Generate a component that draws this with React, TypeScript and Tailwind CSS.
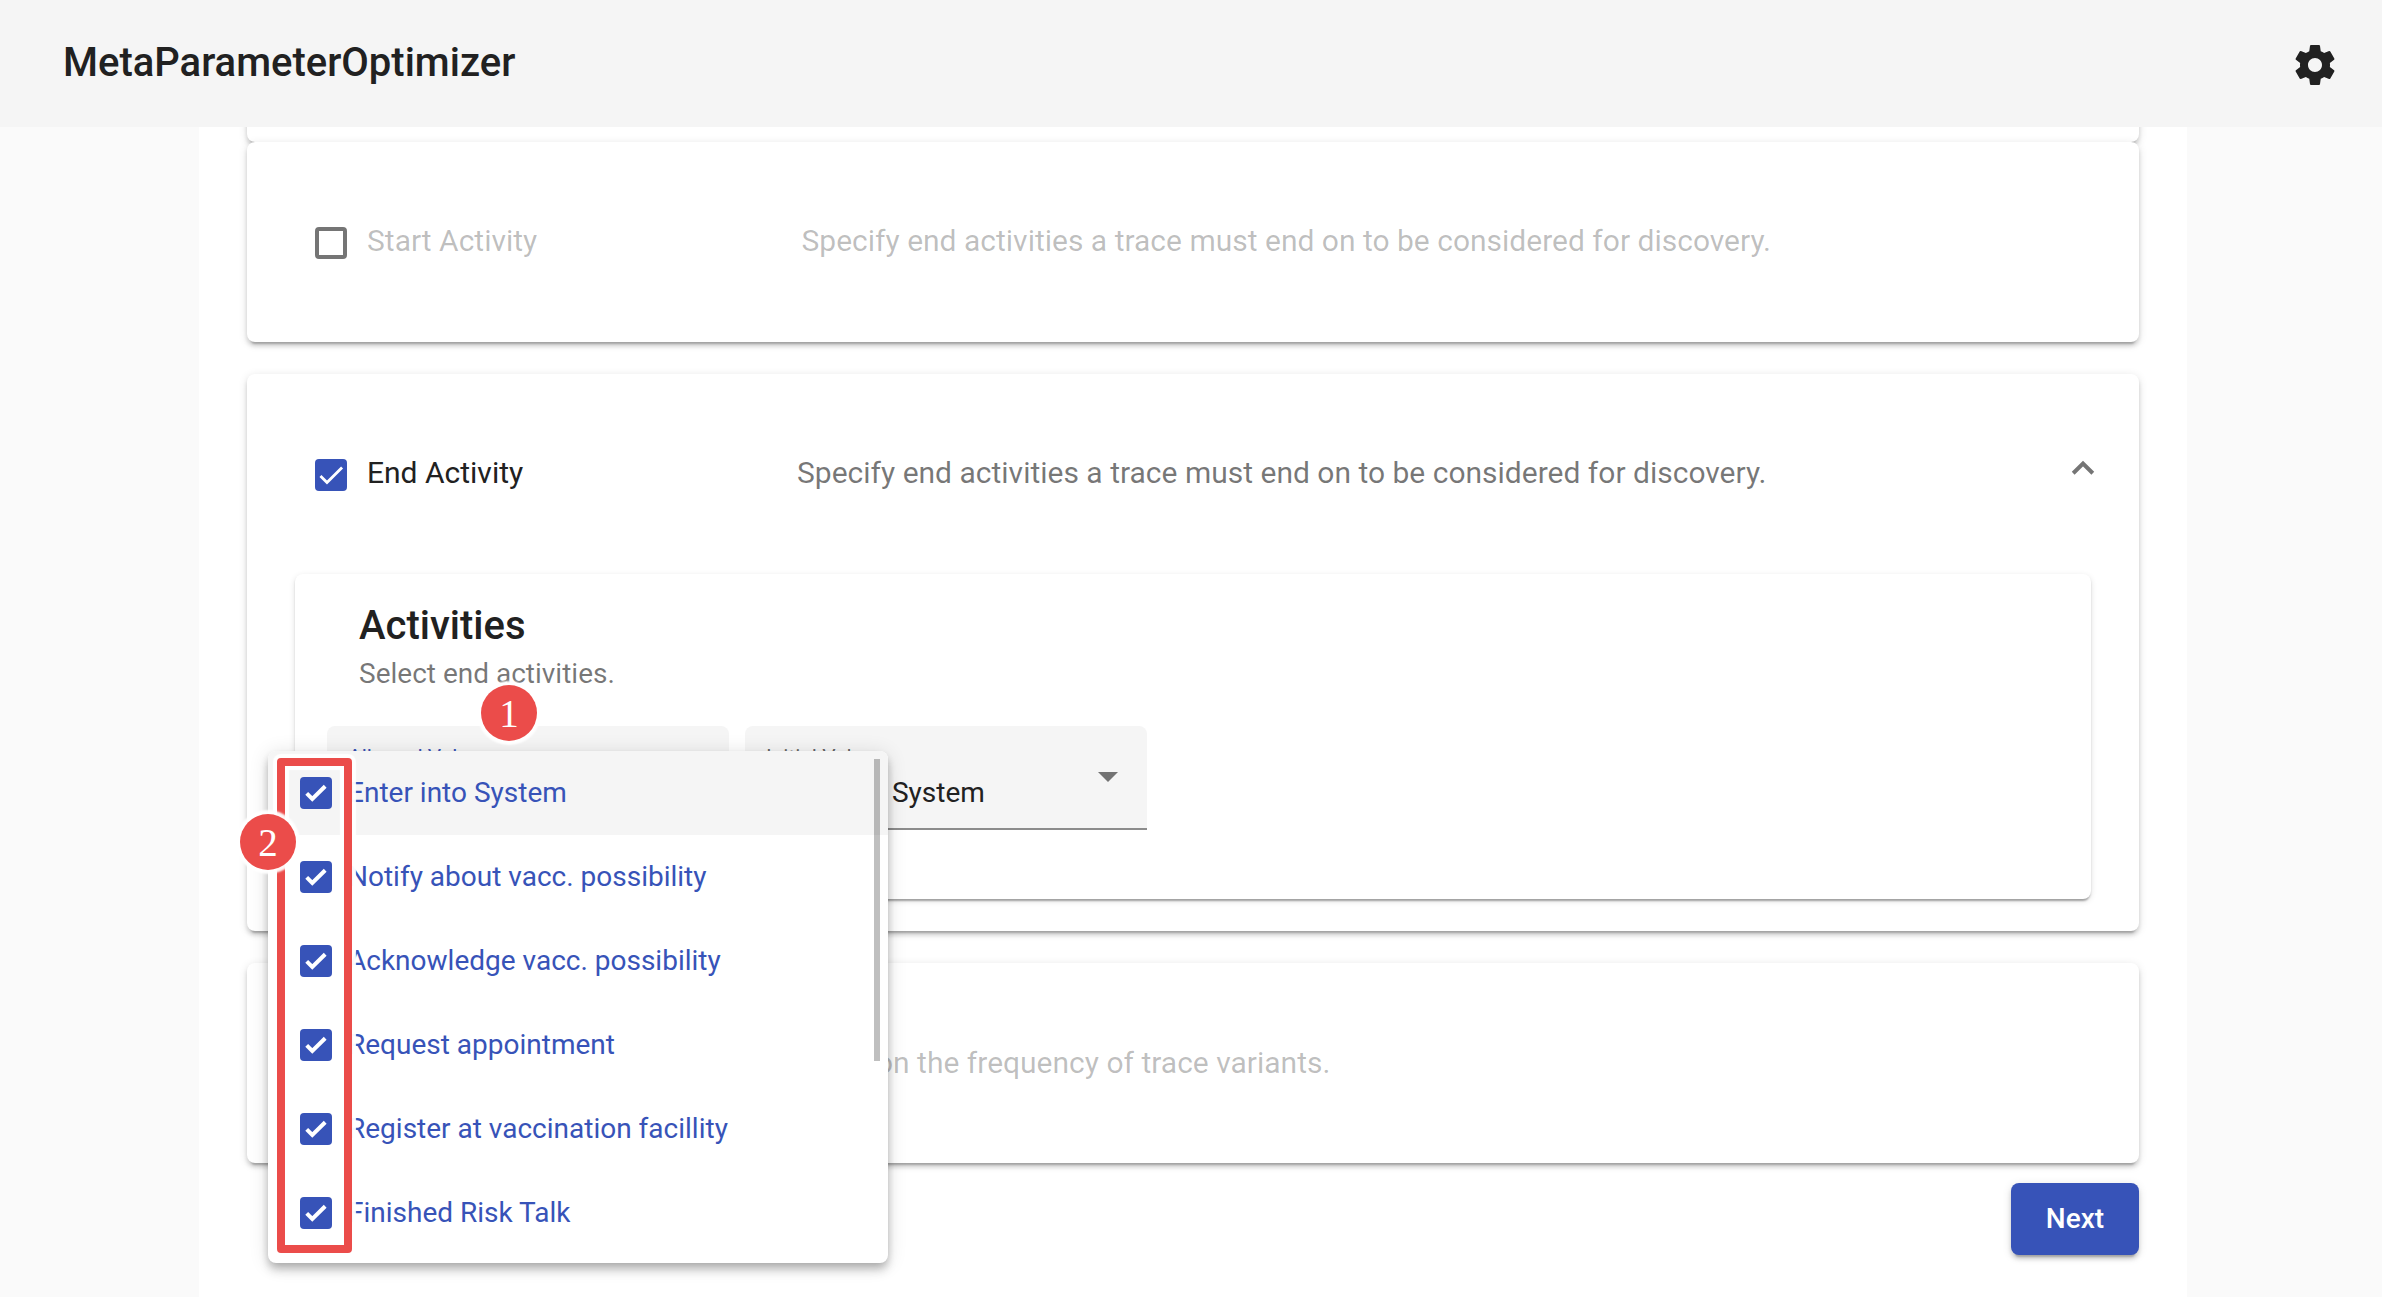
import React from "react";

const steps = [
  "Enter into System",
  "Notify about vacc. possibility",
  "Acknowledge vacc. possibility",
  "Request appointment",
  "Register at vaccination facillity",
  "Finished Risk Talk",
];

const cardClass =
  "w-full shrink-0 rounded-lg bg-white shadow-[0_6px_2px_-4px_rgba(0,0,0,0.2),0_4px_4px_0_rgba(0,0,0,0.14),0_2px_10px_0_rgba(0,0,0,0.12)]";

function OptionCheckbox() {
  return (
    <span className="flex size-8 shrink-0 items-center justify-center rounded-[4px] bg-[#3753b8]">
      <svg viewBox="0 0 32 32" className="size-8" fill="none" stroke="#fff" strokeWidth="4">
        <path d="M6.7 16.3 L12.3 21.9 L25.2 9.3" />
      </svg>
    </span>
  );
}

function Badge({ label, className }: { label: string; className: string }) {
  return (
    <span
      className={
        "absolute flex size-14 items-center justify-center rounded-full bg-[#eb4c4a] pt-px font-['Liberation_Serif',serif] text-[39px] leading-none text-white shadow-[0_0_2px_4px_rgba(255,255,255,0.95)] " +
        className
      }
    >
      {label}
    </span>
  );
}

function Menu() {
  return (
    <div className="absolute left-[268px] top-[751px] flex h-[512px] w-[620px] flex-col rounded-lg bg-white shadow-[0_4px_8px_-2px_rgba(0,0,0,0.2),0_8px_10px_0_rgba(0,0,0,0.14),0_2px_20px_0_rgba(0,0,0,0.12)]">
      {steps.map((s, i) => (
        <div
          key={s}
          className={
            "flex h-[84px] shrink-0 items-center gap-4 px-8 text-[28px] text-[#3753b8] " +
            (i === 0 ? "rounded-t-lg bg-[#f5f5f5]" : "")
          }
        >
          <OptionCheckbox />
          <span>{s}</span>
        </div>
      ))}
      <div className="absolute right-2 top-2 h-[302px] w-1.5 bg-black/25" />
      <div className="absolute left-[9px] top-[6.5px] h-[495px] w-[75px] rounded-[4px] border-[8px] border-[#eb4c4a] shadow-[0_0_1px_4px_rgba(255,255,255,0.97),inset_0_0_1px_4px_rgba(255,255,255,0.97)]" />
    </div>
  );
}

export default function App() {
  return (
    <div className="relative flex h-[1297px] w-[2382px] flex-col overflow-hidden bg-[#fafafa] font-[Roboto,sans-serif] text-[#212121]">
      <header className="z-10 flex h-[127px] shrink-0 items-center justify-between bg-[#f5f5f5] pl-[63px] pr-[43px]">
        <h1 className="-mt-px text-[40px] font-medium leading-[64px]">MetaParameterOptimizer</h1>
        <svg viewBox="0 0 24 24" className="mt-[3px] size-12" fill="currentColor">
          <path d="M19.43 12.98c.04-.32.07-.64.07-.98s-.03-.66-.07-.98l2.11-1.65c.19-.15.24-.42.12-.64l-2-3.46c-.12-.22-.39-.3-.61-.22l-2.49 1c-.52-.4-1.08-.73-1.69-.98l-.38-2.65C14.46 2.18 14.25 2 14 2h-4c-.25 0-.46.18-.49.42l-.38 2.65c-.61.25-1.17.59-1.69.98l-2.49-1c-.23-.09-.49 0-.61.22l-2 3.46c-.13.22-.07.49.12.64l2.11 1.65c-.04.32-.07.65-.07.98s.03.66.07.98l-2.11 1.65c-.19.15-.24.42-.12.64l2 3.46c.12.22.39.3.61.22l2.49-1c.52.4 1.08.73 1.69.98l.38 2.65c.03.24.24.42.49.42h4c.25 0 .46-.18.49-.42l.38-2.65c.61-.25 1.17-.59 1.69-.98l2.49 1c.23.09.49 0 .61-.22l2-3.46c.12-.22.07-.49-.12-.64l-2.11-1.65zM12 15.5c-1.93 0-3.5-1.57-3.5-3.5s1.57-3.5 3.5-3.5 3.5 1.57 3.5 3.5-1.57 3.5-3.5 3.5z" />
        </svg>
      </header>

      <main className="ml-[199px] flex h-[1170px] w-[1988px] shrink-0 flex-col bg-white px-12">
        <section className={cardClass + " -mt-10 h-[55px]"} />

        <section className={cardClass + " flex h-[200px] items-center text-[30px] text-black/26"}>
          <span className="ml-[68px] mt-[2px] size-8 rounded-[4px] border-4 border-[#757575]" />
          <span className="-mt-[4px] ml-5 w-[434.5px]">Start Activity</span>
          <span className="-mt-[4px]">Specify end activities a trace must end on to be considered for discovery.</span>
        </section>

        <section className={cardClass + " mt-8 h-[557px]"}>
          <div className="flex h-[200px] items-center text-[30px]">
            <span className="ml-[68px] mt-[2px] flex size-8 rounded-[4px] bg-[#3753b8]">
              <svg viewBox="0 0 24 24" className="size-8" fill="none" stroke="#fff" strokeWidth="2.1">
                <path d="M4.1 12.7 L9 17.6 L20.3 6.3" />
              </svg>
            </span>
            <span className="-mt-[4px] ml-5 w-[430px]">End Activity</span>
            <span className="-mt-[4px] text-black/54">
              Specify end activities a trace must end on to be considered for discovery.
            </span>
            <svg viewBox="0 0 24 16" className="-mt-[12px] ml-auto mr-[44px] h-4 w-6" fill="none" stroke="#757575" strokeWidth="4">
              <path d="M2.2 13.2 L12 3.6 L21.8 13.2" />
            </svg>
          </div>
          <div className="mx-12 flex h-[325px] flex-col rounded-lg bg-white px-8 pt-8 shadow-[0_4px_2px_-2px_rgba(0,0,0,0.2),0_2px_2px_0_rgba(0,0,0,0.14),0_2px_6px_0_rgba(0,0,0,0.12)]">
            <h2 className="ml-8 text-[40px] font-medium leading-[40px]">Activities</h2>
            <p className="ml-8 mt-2 text-[28px] leading-[40px] text-black/54">Select end activities.</p>
            <div className="mt-8 flex gap-4">
              <div className="h-[104px] w-[402px] rounded-t-lg border-b-2 border-[#3753b8] bg-[#f5f5f5] px-[21px] pt-[19px] text-[21px] leading-6 text-[#3753b8]">
                Allowed Values
              </div>
              <div className="flex h-[104px] w-[402px] justify-between rounded-t-lg border-b-2 border-[#8c8c8c] bg-[#f5f5f5] pl-[21px] pr-6">
                <div className="pt-[19px]">
                  <div className="text-[21px] leading-6 text-black/60">Initial Value</div>
                  <div className="mt-2 text-[28px] leading-8">Enter into System</div>
                </div>
                <svg viewBox="0 0 20 10" className="mr-[5px] mt-[46px] h-2.5 w-5" fill="#737373">
                  <path d="M0 0h20L10 10z" />
                </svg>
              </div>
            </div>
          </div>
        </section>

        <section className={cardClass + " mt-8 flex h-[200px] items-center text-[30px] text-black/26"}>
          <span className="ml-[68px] mt-[2px] size-8 rounded-[4px] border-4 border-[#757575]" />
          <span className="-mt-[2px] ml-[454.5px]">Filter on the frequency of trace variants.</span>
        </section>

        <button className="mt-5 h-[72px] w-32 shrink-0 self-end rounded-lg bg-[#3753b8] text-[28px] font-medium text-white shadow-[0_6px_2px_-4px_rgba(0,0,0,0.2),0_4px_4px_0_rgba(0,0,0,0.14),0_2px_10px_0_rgba(0,0,0,0.12)]">
          Next
        </button>
      </main>

      <Menu />
      <Badge label="1" className="left-[481px] top-[685px]" />
      <Badge label="2" className="left-[240px] top-[814px]" />
    </div>
  );
}
